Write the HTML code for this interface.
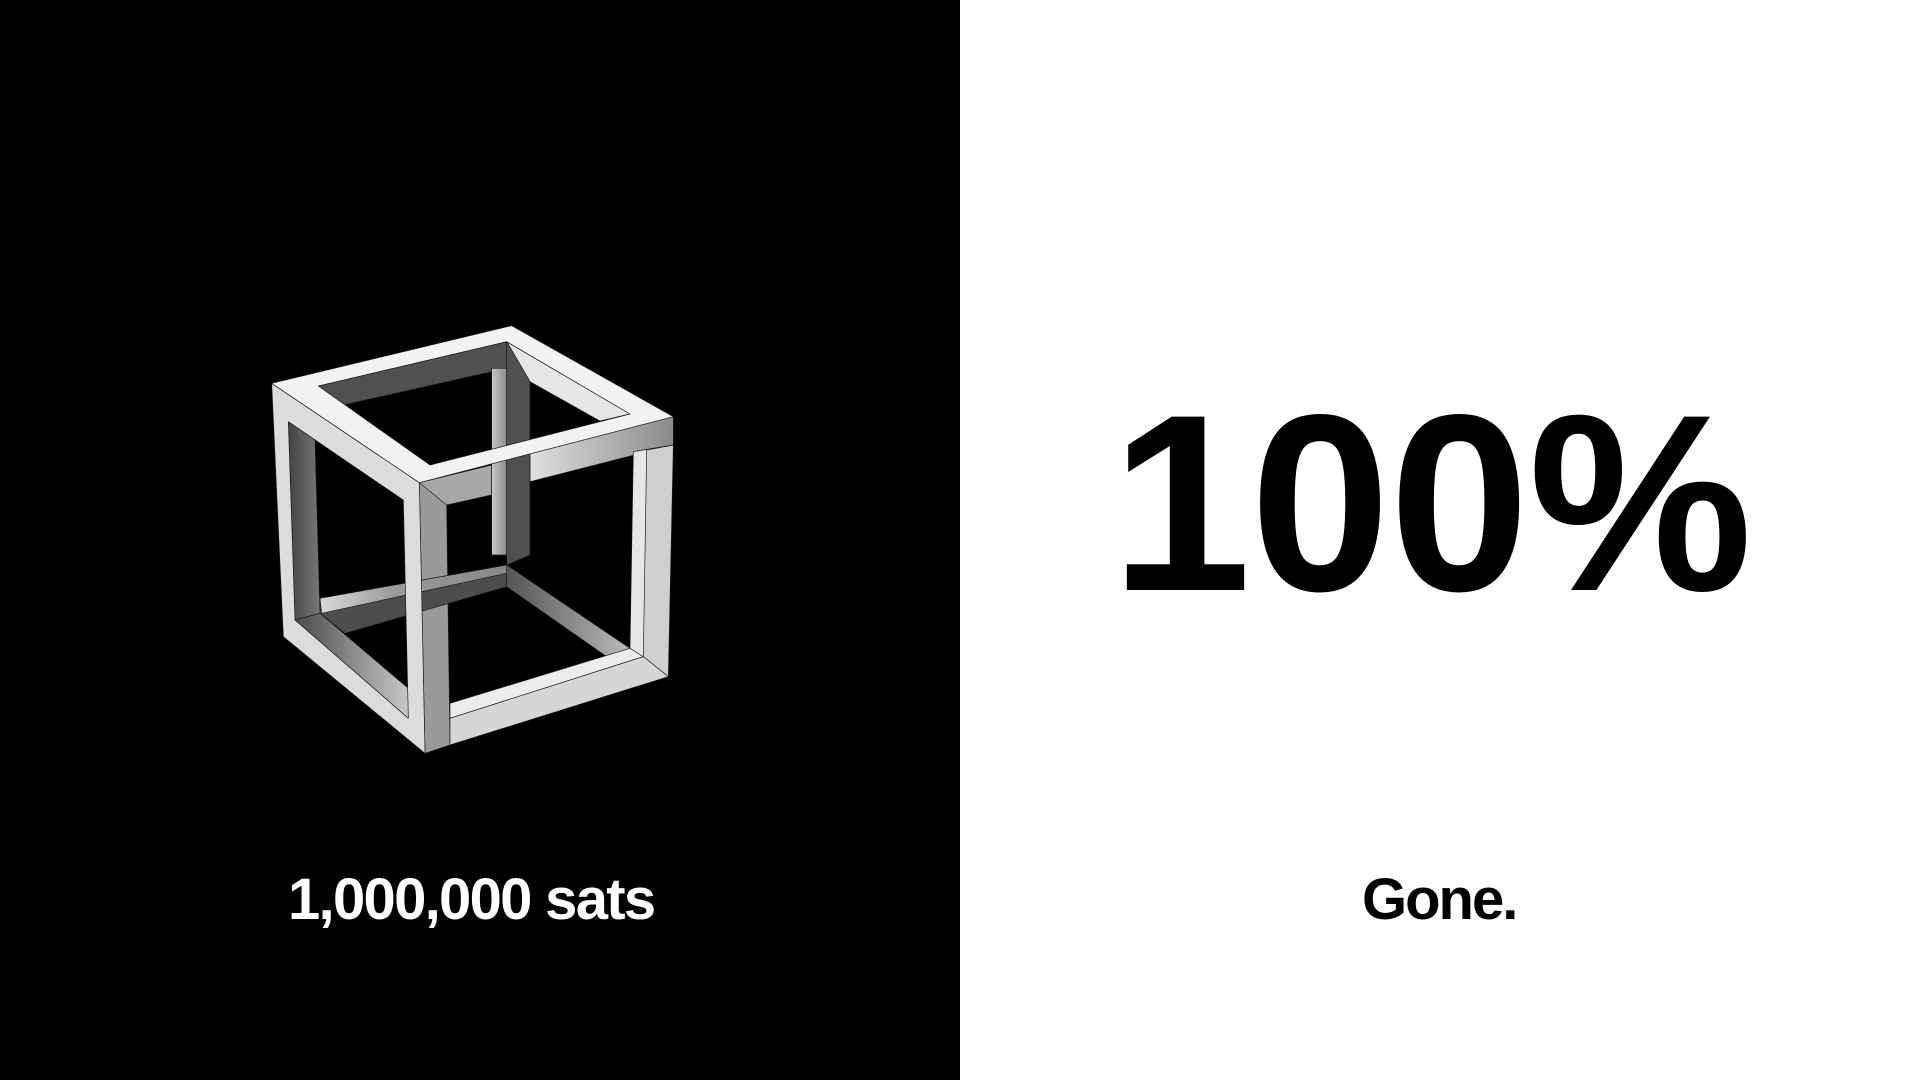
<!DOCTYPE html>
<html><head><meta charset="utf-8"><style>
html,body{margin:0;padding:0;width:1920px;height:1080px;overflow:hidden;background:#fff;font-family:"Liberation Sans",Arial,sans-serif;}
#left{position:absolute;left:0;top:0;width:960px;height:1080px;background:#000;}
.t{position:absolute;font-weight:bold;white-space:nowrap;line-height:1;}
#sats{left:288px;top:871px;font-size:58px;color:#fff;letter-spacing:-1.7px;}
#gone{left:1362px;top:871px;font-size:58px;color:#000;letter-spacing:-2px;}
#pct{left:1111px;top:378px;font-size:252px;color:#000;letter-spacing:-1px;}
svg{position:absolute;left:260px;top:315px;}
</style></head><body>
<div id="left"></div>
<svg width="420" height="450" viewBox="0 0 1260 1350">
<defs>
<linearGradient id="g1" x1="0" x2="1" y1="0" y2="0"><stop offset="0" stop-color="#e0e0e0"/><stop offset="1" stop-color="#8a8a8a"/></linearGradient>
<linearGradient id="g2" x1="0" x2="1" y1="0" y2="0"><stop offset="0" stop-color="#d8d8d8"/><stop offset="0.4" stop-color="#9a9a9a"/><stop offset="1" stop-color="#888"/></linearGradient>
<linearGradient id="g3" x1="0" x2="1" y1="0" y2="0"><stop offset="0" stop-color="#4a4a4a"/><stop offset="1" stop-color="#c8c8c8"/></linearGradient>
<linearGradient id="g4" x1="0" x2="1" y1="0" y2="0"><stop offset="0" stop-color="#555"/><stop offset="1" stop-color="#bbb"/></linearGradient>
<linearGradient id="g5" x1="0" x2="1" y1="0" y2="0"><stop offset="0" stop-color="#444"/><stop offset="1" stop-color="#777"/></linearGradient>
<linearGradient id="g6" x1="0" x2="1" y1="0" y2="0"><stop offset="0" stop-color="#c8c8c8"/><stop offset="1" stop-color="#8c8c8c"/></linearGradient>
</defs>
<g stroke="#1a1a1a" stroke-width="2" stroke-linejoin="round">
<polygon points="175,213 740,80 740,160 250,270" fill="#505050"/>
<polygon points="740,80 1110,297 1020,318 810,200" fill="#e6e6e6"/>
<polygon points="478,503 695,450 695,540 560,570 478,590" fill="#a8a8a8"/>
<polygon points="810,410 1240,305 1240,390 810,500" fill="url(#g1)"/>
<polygon points="695,160 740,160 740,720 695,720" fill="url(#g6)"/>
<polygon points="740,80 810,200 810,720 740,750" fill="#505050"/>
<polygon points="740,750 1110,1000 1040,1025 740,815" fill="url(#g4)"/>
<polygon points="478,503 560,570 570,1290 495,1315" fill="#9a9a9a"/>
<polygon points="180,850 740,750 740,815 255,955 180,895" fill="#4c4c4c"/>
<polygon points="180,850 740,750 740,775 185,895" fill="url(#g2)"/>
<polygon points="1120,410 1240,390 1225,1085 1110,1000" fill="#e6e6e6"/>
<polygon points="1160,405 1240,390 1225,1085 1150,1025" fill="#cfcfcf"/>
<polygon points="570,1165 1110,1000 1150,1025 570,1210" fill="#ececec"/>
<polygon points="570,1210 1150,1025 1225,1085 570,1290" fill="#d6d6d6"/>
<polygon points="85,320 165,375 180,895 105,915" fill="url(#g5)"/>
<polygon points="105,915 180,895 445,1120 445,1210" fill="url(#g3)"/>
<path fill-rule="evenodd" fill="#dcdcdc" d="M35,205 L478,503 L495,1315 L70,965 Z M85,320 L105,915 L445,1210 L430,555 Z"/>
<path fill-rule="evenodd" fill="#f2f2f2" d="M35,205 L755,32 L1240,305 L478,503 Z M175,213 L510,450 L1110,297 L740,80 Z"/>
</g>
</svg>
<div class="t" id="sats">1,000,000 sats</div>
<div class="t" id="pct">100%</div>
<div class="t" id="gone">Gone.</div>
</body></html>
